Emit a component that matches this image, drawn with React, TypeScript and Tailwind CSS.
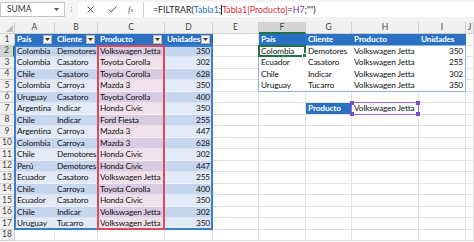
import React from "react";

type Kind =
  | "plain"
  | "th"
  | "sh"
  | "dark"
  | "light"
  | "cdark"
  | "clight"
  | "spill"
  | "blue"
  | "h7";

type CellData = { t?: string; k: Kind; num?: boolean };

const T1: [string, string, string, string][] = [
  ["Colombia", "Demotores", "Volkswagen Jetta", "350"],
  ["Colombia", "Casatoro", "Toyota Corolla", "302"],
  ["Chile", "Casatoro", "Toyota Corolla", "628"],
  ["Colombia", "Carroya", "Mazda 3", "350"],
  ["Uruguay", "Casatoro", "Toyota Corolla", "400"],
  ["Argentina", "Indicar", "Honda Civic", "350"],
  ["Chile", "Indicar", "Ford Fiesta", "255"],
  ["Argentina", "Carroya", "Mazda 3", "447"],
  ["Colombia", "Carroya", "Mazda 3", "628"],
  ["Chile", "Demotores", "Honda Civic", "302"],
  ["Perú", "Demotores", "Honda Civic", "447"],
  ["Ecuador", "Casatoro", "Volkswagen Jetta", "255"],
  ["Chile", "Carroya", "Toyota Corolla", "400"],
  ["Ecuador", "Casatoro", "Honda Civic", "350"],
  ["Chile", "Indicar", "Volkswagen Jetta", "302"],
  ["Uruguay", "Tucarro", "Volkswagen Jetta", "350"],
];

const SP: [string, string, string, string][] = [
  ["Colombia", "Demotores", "Volkswagen Jetta", "350"],
  ["Ecuador", "Casatoro", "Volkswagen Jetta", "255"],
  ["Chile", "Indicar", "Volkswagen Jetta", "302"],
  ["Uruguay", "Tucarro", "Volkswagen Jetta", "350"],
];

const HEAD = ["País", "Cliente", "Producto", "Unidades"];
const LETTERS = ["A", "B", "C", "D", "E", "F", "G", "H", "I", "J"];

function getCell(r: number, c: number): CellData {
  if (c <= 3) {
    if (r === 1) return { t: HEAD[c], k: "th" };
    if (r >= 2 && r <= 17) {
      const d = T1[r - 2];
      const dark = r % 2 === 0;
      const k: Kind = c === 2 ? (dark ? "cdark" : "clight") : dark ? "dark" : "light";
      return { t: d[c], k, num: c === 3 };
    }
  }
  if (c >= 5 && c <= 8) {
    const i = c - 5;
    if (r === 1) return { t: HEAD[i], k: "sh" };
    if (r >= 2 && r <= 5) return { t: SP[r - 2][i], k: "spill", num: i === 3 };
  }
  if (r === 7 && c === 6) return { t: "Producto", k: "blue" };
  if (r === 7 && c === 7) return { t: "Volkswagen Jetta", k: "h7" };
  return { k: "plain" };
}

const KIND_CLS: Record<Kind, string> = {
  plain: "bg-white border-[#e1e1e1] text-black",
  th: "bg-[#2a71c4] border-r-[#2a71c4] border-b-[#2a71c4] text-white font-bold",
  sh: "bg-[#2a71c4] border-r-[#2a71c4] border-b-[#2a71c4] text-white font-bold",
  dark: "bg-[#c6d6ef] border-r-transparent border-b-[#dbe4f3] text-[#111]",
  light: "bg-[#e2eaf7] border-r-transparent border-b-[#eef3fa] text-[#111]",
  cdark: "bg-[#d9cbe2] border-r-transparent border-b-[#e8ddec] text-[#111]",
  clight: "bg-[#f1e1eb] border-r-transparent border-b-[#f7edf3] text-[#111]",
  spill: "bg-white border-white text-[#111]",
  blue: "bg-[#2a71c4] border-r-[#2a71c4] border-b-[#e1e1e1] text-white font-bold",
  h7: "bg-white border-[#e1e1e1] text-[#111]",
};

function Dropdown() {
  return (
    <span className="ml-auto flex h-[9px] w-[9px] shrink-0 items-center justify-center border border-[#b5b5b5] bg-[#f4f4f4]">
      <svg width="5" height="3" viewBox="0 0 5 3">
        <path d="M0 0 L5 0 L2.5 3 Z" fill="#333" />
      </svg>
    </span>
  );
}

function Cell({ c }: { c: CellData }) {
  return (
    <div
      className={
        "flex items-center overflow-hidden whitespace-nowrap border-r border-b px-[2px] text-[8.3px] leading-none tracking-[-0.15px] " +
        KIND_CLS[c.k] +
        (c.num ? " justify-end" : "")
      }
    >
      {c.t !== undefined && <span>{c.t}</span>}
      {c.k === "th" && <Dropdown />}
    </div>
  );
}

export default function App() {
  const rows = Array.from({ length: 18 }, (_, i) => i + 1);
  return (
    <div
      className="h-[242px] w-[474px] overflow-hidden bg-white text-black"
      style={{ fontFamily: "Lato, 'Open Sans', sans-serif" }}
    >
      {/* Formula bar */}
      <div className="flex h-[22px] flex-col bg-[#f3f3f3]">
        <div className="flex h-[17px] items-stretch pt-[2px]">
          <div className="flex w-[65px] items-center justify-between border border-[#c6c6c6] bg-white pl-[6px] pr-[5px]">
            <span className="text-[8.5px] text-[#333]">SUMA</span>
            <svg width="5" height="3" viewBox="0 0 5 3">
              <path d="M0 0 L5 0 L2.5 3 Z" fill="#555" />
            </svg>
          </div>
          <div className="flex w-[13px] items-center justify-center">
            <span className="flex flex-col gap-[1px]">
              <span className="h-[1px] w-[1px] bg-[#aaa]" />
              <span className="h-[1px] w-[1px] bg-[#aaa]" />
              <span className="h-[1px] w-[1px] bg-[#aaa]" />
            </span>
          </div>
          <div className="flex w-[65px] items-center bg-white">
            <svg width="7" height="7" viewBox="0 0 7 7" className="ml-[9px]">
              <path d="M0.5 0.5 L6.5 6.5 M6.5 0.5 L0.5 6.5" stroke="#555" strokeWidth="1" />
            </svg>
            <svg width="9" height="7" viewBox="0 0 9 7" className="ml-[14px]">
              <path d="M0.5 3.5 L3.2 6 L8.5 0.5" stroke="#555" strokeWidth="1" fill="none" />
            </svg>
            <span className="ml-[11px] text-[8.5px] italic text-[#555]" style={{ fontFamily: "'Liberation Serif', serif" }}>
              f<span className="text-[6.5px]">x</span>
            </span>
          </div>
          <div className="flex flex-1 items-center border-l border-[#d0d0d0] bg-white pl-[9px] text-[8.8px] text-[#222]">
            <span>=FILTRAR(</span>
            <span className="text-[#2a6fc0]">Tabla1</span>
            <span>;</span>
            <span className="h-[10px] w-[1px] bg-[#222]" />
            <span className="text-[#d42d3b]">Tabla1[Producto]</span>
            <span>=</span>
            <span className="text-[#7030a0]">H7</span>
            <span>;"")</span>
          </div>
        </div>
      </div>

      {/* Sheet */}
      <div className="relative">
        <div className="grid grid-cols-[15px_40px_43px_67px_48px_46px_47px_46px_67px_47px_1fr] grid-rows-[12px_repeat(18,11.5px)]">
          <div className="relative border-r border-b border-[#cfcfcf] bg-[#f0f0f0]">
            <svg width="7" height="7" viewBox="0 0 7 7" className="absolute bottom-[1px] right-[1px]">
              <path d="M7 0 L7 7 L0 7 Z" fill="#bdbdbd" />
            </svg>
          </div>
          {LETTERS.map((l) => (
            <div
              key={l}
              className={
                "flex items-center justify-center border-r text-[8.5px] " +
                (l === "F"
                  ? "border-b-2 border-r-[#cfcfcf] border-b-[#217346] bg-[#d4d4d4] text-[#1e5c36]"
                  : "border-b border-[#cfcfcf] bg-[#f0f0f0] text-[#444]")
              }
            >
              {l}
            </div>
          ))}
          {rows.map((r) => (
            <React.Fragment key={r}>
              <div
                className={
                  "flex items-center justify-center border-b text-[8.5px] " +
                  (r === 2
                    ? "border-r-2 border-r-[#217346] border-b-[#cfcfcf] bg-[#d4d4d4] text-[#1e5c36]"
                    : "border-r border-[#cfcfcf] bg-[#f0f0f0] text-[#444]")
                }
              >
                {r}
              </div>
              {LETTERS.map((_, c) => (
                <Cell key={c} c={getCell(r, c)} />
              ))}
            </React.Fragment>
          ))}
        </div>

        {/* Reference highlight overlays */}
        <div className="pointer-events-none absolute inset-0 grid grid-cols-[15px_40px_43px_67px_48px_46px_47px_46px_67px_47px_1fr] grid-rows-[12px_repeat(18,11.5px)]">
          <div className="col-start-2 col-end-6 row-start-3 row-end-19 -ml-px -mt-px border-2 border-[#3a7fd2]" />
          <div className="col-start-4 col-end-5 row-start-3 row-end-19 -ml-px -mt-px border-2 border-[#dd4a5c]" />
          <div className="col-start-7 col-end-11 row-start-3 row-end-7 -ml-px -mt-px border border-[#8fb5e3]" />
          <div className="relative col-start-7 col-end-8 row-start-3 row-end-4 -ml-px -mt-px border-2 border-[#217346]">
            <span className="absolute -bottom-[3px] -right-[3px] h-[5px] w-[5px] border border-white bg-[#217346]" />
          </div>
          <div className="relative col-start-9 col-end-10 row-start-8 row-end-9 -ml-px -mt-px border border-[#9a6fd6]">
            <span className="absolute -left-[2px] -top-[2px] h-[4px] w-[4px] bg-[#7a4cc2]" />
            <span className="absolute -right-[2px] -top-[2px] h-[4px] w-[4px] bg-[#7a4cc2]" />
            <span className="absolute -bottom-[2px] -left-[2px] h-[4px] w-[4px] bg-[#7a4cc2]" />
            <span className="absolute -bottom-[2px] -right-[2px] h-[4px] w-[4px] bg-[#7a4cc2]" />
          </div>
        </div>
      </div>
    </div>
  );
}
